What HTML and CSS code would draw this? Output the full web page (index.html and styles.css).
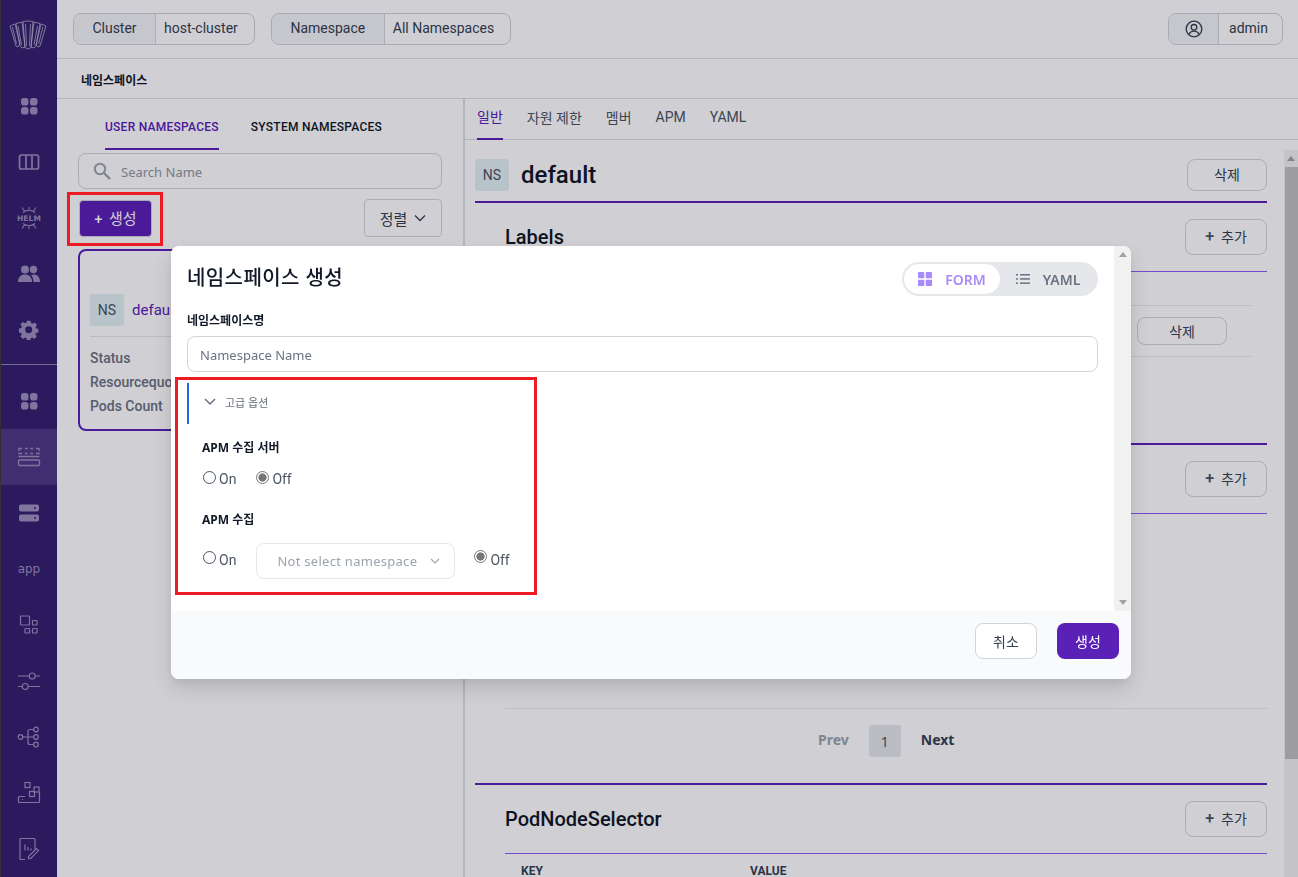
FILE: index.html
```html
<!DOCTYPE html>
<html lang="ko">
<head>
<meta charset="utf-8">
<title>네임스페이스</title>
<link rel="stylesheet" href="styles.css">
</head>
<body>
<div class="app">
  <nav class="rail">
    <div class="logo">
      <svg width="38" height="30" viewBox="0 0 38 30" fill="none" stroke="currentColor" stroke-width=".7" stroke-linejoin="round">
        <path d="M1 6 6 4l5 20-2 3-2-1z"/><path d="M7 3.500 13 2l3 25-3 1-2-2z"/><path d="M14 1.500 19 1l5 .5-2 26-3 1.500-3-1.500z"/><path d="M25 2l6 1.500-4 22.500-2 2-3-1z"/><path d="M32 4l5 2-6 20-2 1-2-2z"/>
        <path d="M3.500 7l4 17M9 6l3.500 19M16.500 4l1 22M21.500 4l-1 22M28.500 6 25 25M34 7l-4.500 17"/>
      </svg>
    </div>
    <a class="rail-item">
      <svg width="20" height="20" viewBox="0 0 20 20" fill="currentColor"><rect x="2" y="2" width="7.500" height="7.500" rx="2.800"/><rect x="11" y="2" width="7.500" height="7.500" rx="2.800"/><rect x="2" y="11" width="7.500" height="7.500" rx="2.800"/><rect x="11" y="11" width="7.500" height="7.500" rx="2.800"/></svg>
    </a>
    <a class="rail-item">
      <svg width="22" height="18" viewBox="0 0 22 18" fill="none" stroke="currentColor" stroke-width="1.700"><rect x="1.500" y="2" width="19" height="14" rx="2"/><path d="M8 2v14M14 2v14"/></svg>
    </a>
    <a class="rail-item">
      <svg width="26" height="26" viewBox="0 0 26 26" fill="none" stroke="currentColor" stroke-width="1.100"><path d="M7 7.500c3.500-3 8.500-3 12 0M7 18.500c3.500 3 8.500 3 12 0M13 2v2.500M13 21.500V24M6 2.500l2.500 3.500M20 2.500 17.500 6M6 23.500 8.500 20M20 23.500 17.500 20"/><text x="13" y="16" text-anchor="middle" class="helm-text">HELM</text></svg>
    </a>
    <a class="rail-item">
      <svg width="24" height="20" viewBox="0 0 24 20" fill="currentColor"><circle cx="8" cy="5.500" r="4"/><circle cx="16.500" cy="5.500" r="3.700"/><path d="M1 18c0-5 3-7.500 7-7.500s7 2.500 7 7.500z"/><path d="M16.500 18c0-3-.8-5.300-2.500-7 .8-.3 1.600-.5 2.500-.5 4 0 6.500 2.500 6.500 7.500z"/></svg>
    </a>
    <a class="rail-item">
      <svg width="20" height="20" viewBox="0 0 20 20" fill="currentColor"><path fill-rule="evenodd" d="M8.200 1h3.600l.5 2.500 1.500.7 2.200-1.400 2.500 2.500-1.400 2.200.7 1.500 2.200.5v3.600l-2.500.5-.6 1.500 1.400 2.200-2.500 2.500-2.200-1.400-1.500.6-.5 2.500H8.200l-.5-2.500-1.500-.6L4 19.800l-2.500-2.500 1.400-2.200-.6-1.500-2.300-.5V9l2.400-.5.6-1.500L1.500 4.800 4 2.300l2.200 1.400 1.500-.7zM10 6.700a3.600 3.600 0 1 0 0 7.200 3.600 3.600 0 0 0 0-7.200z" transform="translate(0 -.3) scale(.97)"/></svg>
    </a>
    <div class="rail-divider"></div>
    <a class="rail-item">
      <svg width="20" height="20" viewBox="0 0 20 20" fill="currentColor"><rect x="2" y="2" width="7.500" height="7.500" rx="2.800"/><rect x="11" y="2" width="7.500" height="7.500" rx="2.800"/><rect x="2" y="11" width="7.500" height="7.500" rx="2.800"/><rect x="11" y="11" width="7.500" height="7.500" rx="2.800"/></svg>
    </a>
    <a class="rail-item rail-active">
      <svg width="24" height="22" viewBox="0 0 24 22" fill="none" stroke="currentColor" stroke-width="1.300"><path d="M2 5V2.500h3M8 2.500h2.500M13.500 2.500H16M19 2.500h3V5M2 6.500v1h3M8 7.500h2.500M13.500 7.500H16M19 7.500h3v-1"/><path d="M1.500 10.500h21" stroke-width="1.500"/><rect x="1.500" y="14" width="21" height="5.500" rx="1"/></svg>
    </a>
    <a class="rail-item">
      <svg width="22" height="20" viewBox="0 0 22 20" fill="currentColor"><path fill-rule="evenodd" d="M3 1.500h16a2 2 0 0 1 2 2v3a2 2 0 0 1-2 2H3a2 2 0 0 1-2-2v-3a2 2 0 0 1 2-2zm14 2.500a1 1 0 1 0 0 2 1 1 0 0 0 0-2zM3 11.500h16a2 2 0 0 1 2 2v3a2 2 0 0 1-2 2H3a2 2 0 0 1-2-2v-3a2 2 0 0 1 2-2zm14 2.500a1 1 0 1 0 0 2 1 1 0 0 0 0-2z"/></svg>
    </a>
    <a class="rail-item"><span class="rail-app">app</span></a>
    <a class="rail-item">
      <svg width="20" height="20" viewBox="0 0 20 20" fill="none" stroke="currentColor" stroke-width="1.200"><rect x="1.500" y="1" width="9" height="9" rx=".8"/><rect x="13.500" y="5.500" width="4.500" height="4.500" rx=".6"/><rect x="6" y="13.500" width="4.500" height="4.500" rx=".6"/><rect x="13.500" y="13.500" width="4.500" height="4.500" rx=".6"/></svg>
    </a>
    <a class="rail-item">
      <svg width="24" height="20" viewBox="0 0 24 20" fill="none" stroke="currentColor" stroke-width="1.200"><path d="M1 5h11M18.500 5H23M1 15.500h4M11.500 15.500H23"/><circle cx="15.200" cy="5" r="3"/><circle cx="8.200" cy="15.500" r="3"/></svg>
    </a>
    <a class="rail-item">
      <svg width="24" height="22" viewBox="0 0 24 22" fill="none" stroke="currentColor" stroke-width="1.200"><circle cx="3.500" cy="11" r="2.300"/><circle cx="19" cy="3.500" r="2.300"/><circle cx="19" cy="11" r="2.300"/><circle cx="19" cy="18.500" r="2.300"/><path d="M6 11h10.500M11 11V5.500a2 2 0 0 1 2-2h3.500M11 11v5.500a2 2 0 0 0 2 2h3.500"/></svg>
    </a>
    <a class="rail-item">
      <svg width="24" height="24" viewBox="0 0 24 24" fill="none" stroke="currentColor" stroke-width="1.200"><rect x="8" y="1.500" width="5" height="5"/><rect x="17" y="6" width="5" height="5"/><rect x="12.500" y="10.500" width="5" height="5"/><path d="M8 15.500H2.500a1 1 0 0 0-1 1v4a1 1 0 0 0 1 1h19a1 1 0 0 0 1-1V11"/><path d="M5 18.500h1"/></svg>
    </a>
    <a class="rail-item">
      <svg width="22" height="24" viewBox="0 0 22 24" fill="none" stroke="currentColor" stroke-width="1.200"><path d="M7 22.500H3a1 1 0 0 1-1-1v-19a1 1 0 0 1 1-1h13a1 1 0 0 1 1 1V13"/><path d="M7 7.500v6M10 10v3.500M13 11.500v2"/><path d="M11 21.500v2l2 .1 8-8-2-2z" transform="translate(-.5 -2)"/></svg>
    </a>
  </nav>

  <main class="main">
    <header class="topbar">
      <div class="pair"><span class="pair-key pair-key-cluster">Cluster</span><span class="pair-val">host-cluster</span></div>
      <div class="pair"><span class="pair-key pair-key-ns">Namespace</span><span class="pair-val">All Namespaces</span></div>
      <div class="pair pair-user">
        <span class="pair-key pair-key-user">
          <svg width="18" height="18" viewBox="0 0 18 18" fill="none" stroke="currentColor" stroke-width="1.300"><circle cx="9" cy="9" r="7.800"/><circle cx="9" cy="7.300" r="2.800"/><path d="M3.800 14.500c1-2.300 3-3.300 5.200-3.300s4.200 1 5.200 3.300"/></svg>
        </span>
        <span class="pair-val pair-val-user">admin</span>
      </div>
    </header>
    <div class="crumb">네임스페이스</div>

    <div class="split">
      <section class="list-pane">
        <div class="list-tabs">
          <span class="list-tab list-tab-on">USER NAMESPACES</span>
          <span class="list-tab">SYSTEM NAMESPACES</span>
        </div>
        <div class="search">
          <svg width="18" height="18" viewBox="0 0 18 18" fill="none" stroke="currentColor" stroke-width="2"><circle cx="7" cy="7" r="5.200"/><path d="m11 11 6 6" stroke-width="2.400"/></svg>
          <span>Search Name</span>
        </div>
        <div class="list-actions">
          <button class="btn-create"><span class="plus">+</span> 생성</button>
          <button class="btn-sort">정렬
            <svg width="12" height="8" viewBox="0 0 12 8" fill="none" stroke="currentColor" stroke-width="1.300"><path d="m1 1.500 5 5 5-5"/></svg>
          </button>
        </div>
        <article class="ns-card">
          <div class="ns-head"><span class="badge">NS</span><span class="ns-name">default</span></div>
          <div class="ns-rows">
            <div>Status</div>
            <div>Resourcequota</div>
            <div>Pods Count</div>
          </div>
        </article>
      </section>

      <section class="detail-pane">
        <div class="detail-tabs">
          <span class="detail-tab detail-tab-on">일반</span>
          <span class="detail-tab">자원 제한</span>
          <span class="detail-tab">멤버</span>
          <span class="detail-tab">APM</span>
          <span class="detail-tab">YAML</span>
        </div>
        <div class="detail-scroll">
          <div class="detail-body">
            <div class="detail-head">
              <span class="badge">NS</span>
              <h1 class="detail-title">default</h1>
              <button class="btn-line btn-del-top">삭제</button>
            </div>

            <div class="block block-labels">
              <div class="block-head"><h2>Labels</h2><button class="btn-line btn-add"><span class="plus-dark">+</span>추가</button></div>
              <div class="table-head"></div>
              <div class="table-row"><button class="btn-line btn-del-row">삭제</button></div>
            </div>

            <div class="block block-annot">
              <div class="block-head"><h2>Annotations</h2><button class="btn-line btn-add"><span class="plus-dark">+</span>추가</button></div>
              <div class="annot-space"></div>
              <div class="pager">
                <span class="pager-prev">Prev</span>
                <span class="pager-num">1</span>
                <span class="pager-next">Next</span>
              </div>
            </div>

            <div class="block block-pod">
              <div class="block-head"><h2>PodNodeSelector</h2><button class="btn-line btn-add"><span class="plus-dark">+</span>추가</button></div>
              <div class="pod-cols"><span class="pod-key">KEY</span><span>VALUE</span></div>
            </div>
          </div>
          <div class="page-scroll"><span class="page-arrow"></span><span class="page-thumb"></span></div>
        </div>
      </section>
    </div>
  </main>
</div>

<div class="overlay"></div>

<div class="modal">
  <div class="modal-main">
    <div class="modal-body">
      <div class="modal-head">
        <h3 class="modal-title">네임스페이스 생성</h3>
        <div class="mode">
          <span class="mode-btn mode-on">
            <svg width="14" height="14" viewBox="0 0 14 14" fill="currentColor"><rect width="6.300" height="6.300" rx=".8"/><rect x="7.700" width="6.300" height="6.300" rx=".8"/><rect y="7.700" width="6.300" height="6.300" rx=".8"/><rect x="7.700" y="7.700" width="6.300" height="6.300" rx=".8"/></svg>
            FORM
          </span>
          <span class="mode-btn">
            <svg width="14" height="12" viewBox="0 0 14 12" fill="currentColor"><rect y="1" width="2" height="1.500"/><rect x="4" y="1" width="10" height="1.500"/><rect y="5.200" width="2" height="1.500"/><rect x="4" y="5.200" width="10" height="1.500"/><rect y="9.400" width="2" height="1.500"/><rect x="4" y="9.400" width="10" height="1.500"/></svg>
            YAML
          </span>
        </div>
      </div>
      <label class="field-label">네임스페이스명</label>
      <div class="text-input">Namespace Name</div>

      <div class="expander">
        <svg width="12" height="8" viewBox="0 0 12 8" fill="none" stroke="currentColor" stroke-width="1.500"><path d="m1 1 5 5 5-5"/></svg>
        <span>고급 옵션</span>
      </div>
      <div class="advanced">
        <div class="adv-label">APM 수집 서버</div>
        <div class="radio-row">
          <span class="radio"></span><span class="radio-text">On</span>
          <span class="radio radio-on radio-gap"></span><span class="radio-text">Off</span>
        </div>
        <div class="adv-label adv-label-2">APM 수집</div>
        <div class="radio-row radio-row-2">
          <span class="radio"></span><span class="radio-text">On</span>
          <div class="select">Not select namespace
            <svg width="10" height="6" viewBox="0 0 10 6" fill="none" stroke="currentColor" stroke-width="1.100"><path d="m1 1 4 4 4-4"/></svg>
          </div>
          <span class="radio radio-on"></span><span class="radio-text">Off</span>
        </div>
      </div>
    </div>
    <div class="modal-scroll">
      <span class="tri-up"></span>
      <span class="tri-down"></span>
    </div>
  </div>
  <div class="modal-foot">
    <button class="btn-cancel">취소</button>
    <button class="btn-ok">생성</button>
  </div>
</div>

<div class="mark mark-create"></div>
<div class="mark mark-advanced"></div>
</body>
</html>
```

FILE: styles.css
```css
* { box-sizing: border-box; }
html, body { margin: 0; height: 100%; overflow: hidden; }
body {
  font-family: Roboto, "Noto Sans CJK KR", sans-serif;
  font-size: 14px;
  color: #1f2937;
  background: #fff;
}
button { font: inherit; cursor: pointer; }
h1, h2, h3 { margin: 0; }

.app { display: flex; width: 1298px; height: 877px; }

/* left rail */
.rail {
  flex: 0 0 57px;
  background: #36206f;
  border-left: 1px solid #3d3d3d;
  color: #9d90be;
  display: flex;
  flex-direction: column;
}
.logo { height: 80px; padding: 20px 2px 0 0; display: flex; justify-content: center; align-items: flex-start; color: #c9c4d6; }
.rail-item { height: 56px; flex: none; display: flex; align-items: center; justify-content: center; }
.rail-active { background: #4e3a85; }
.rail-divider { height: 1px; background: #8e84a8; margin: 6px 0 8px; flex: none; }
.rail-app { font-family: "DejaVu Sans", sans-serif; font-size: 12px; letter-spacing: -.1px; }
.helm-text { font-family: "DejaVu Sans", sans-serif; font-size: 7.500px; font-weight: 700; fill: currentColor; stroke: none; letter-spacing: .1px; }

.main { flex: 1; min-width: 0; display: flex; flex-direction: column; }

/* top bar */
.topbar {
  height: 59px;
  flex: none;
  border-bottom: 1px solid #dcdee2;
  display: flex;
  align-items: flex-start;
  gap: 16px;
  padding: 13px 15px 0 16px;
}
.pair {
  height: 32px;
  display: flex;
  border: 1px solid #cfd2d8;
  border-radius: 8px;
  overflow: hidden;
}
.pair-key, .pair-val { display: flex; align-items: center; justify-content: center; color: #374151; padding-bottom: 2px; }
.pair-key { background: #f3f4f6; border-right: 1px solid #d1d5db; }
.pair-key-cluster { width: 82px; }
.pair-val { padding-left: 8px; padding-right: 16px; }
.pair-key-ns { width: 113px; }
.pair-user { margin-left: auto; }
.pair-key-user { width: 50px; color: #374151; padding-bottom: 0; }
.pair-val-user { width: 63px; padding: 0 4px 2px 0; }

.crumb {
  height: 40px;
  flex: none;
  border-bottom: 1px solid #dcdee2;
  padding: 2px 24px 0;
  display: flex;
  align-items: center;
  font-size: 12px;
  font-weight: 700;
  color: #111827;
}

.split { flex: 1; min-height: 0; display: flex; }

/* namespace list */
.list-pane {
  flex: 0 0 408px;
  border-right: 2px solid #dcdee2;
  padding: 0 21px;
}
.list-tabs { display: flex; gap: 32px; padding-left: 27px; height: 51px; }
.list-tab { font-size: 12px; font-weight: 500; height: 51px; display: flex; align-items: center; padding-top: 5px; color: #111827; letter-spacing: .25px; }
.list-tab-on { color: #5b21b6; border-bottom: 2px solid #5b21b6; padding-top: 7px; }
.search {
  height: 36px;
  margin-top: 3px;
  border: 1px solid #d1d5db;
  border-radius: 8px;
  display: flex;
  align-items: center;
  gap: 10px;
  padding-left: 14px;
  color: #9ca3af;
  font-family: "Noto Sans", "Noto Sans CJK KR", sans-serif;
  font-size: 13px;
}
.search span { color: #8f96a1; padding-top: 1px; }
.list-actions { display: flex; justify-content: space-between; align-items: flex-start; margin-top: 10px; padding-left: 1px; }
.btn-create {
  width: 73px;
  height: 37px;
  margin-top: 1px;
  border: 1px solid #d1d5db;
  border-radius: 4px;
  background: #5b21b6;
  color: #fff;
  padding: 0 0 2px;
  font-size: 15px;
}
.plus { margin-right: 3px; font-weight: 500; font-size: 14px; }
.btn-sort {
  width: 78px;
  height: 38px;
  border: 1px solid #d1d5db;
  border-radius: 4px;
  background: transparent;
  color: #374151;
  padding: 0;
  display: flex;
  align-items: center;
  justify-content: center;
  gap: 7px;
  font-size: 15px;
}
.ns-card {
  height: 182px;
  margin-top: 12px;
  border: 2px solid #5b21b6;
  border-radius: 8px;
  padding: 42px 10px 0;
}
.badge {
  width: 34px;
  height: 32px;
  flex: none;
  border-radius: 3px;
  background: #e2f1f2;
  color: #4b5563;
  display: flex;
  align-items: center;
  justify-content: center;
}
.ns-head { display: flex; align-items: center; gap: 8px; height: 33px; }
.ns-name { color: #5b21b6; font-size: 15px; }
.ns-rows { margin-top: 10px; border-top: 1px solid #e5e7eb; padding-top: 9px; color: #6b7280; font-weight: 500; }
.ns-rows div { height: 24px; line-height: 24px; }

/* detail */
.detail-pane { flex: 1; min-width: 0; display: flex; flex-direction: column; }
.detail-tabs { height: 41px; flex: none; border-bottom: 1px solid #dcdee2; display: flex; gap: 24px; padding-left: 12px; }
.detail-tab { color: #4b5563; height: 40px; display: flex; align-items: center; padding-bottom: 5px; }
.detail-tab-on { color: #5b21b6; border-bottom: 2px solid #5b21b6; height: 41px; padding-bottom: 5px; }
.detail-scroll { flex: 1; min-height: 0; display: flex; overflow: hidden; }
.detail-body { flex: 1; min-width: 0; padding: 19px 17px 0 10px; }
.detail-head { display: flex; align-items: center; gap: 12px; height: 44px; padding-bottom: 10px; border-bottom: 2px solid #5b21b6; }
.detail-title { font-size: 24px; font-weight: 500; color: #111827; flex: 1; }
.btn-line {
  background: transparent;
  border: 1px solid #d1d5db;
  border-radius: 8px;
  color: #374151;
  padding: 0;
}
.btn-del-top { width: 80px; height: 32px; padding-bottom: 2px; }
.btn-add { width: 82px; height: 36px; padding-bottom: 3px; }
.plus-dark { font-size: 16px; font-weight: 500; margin-right: 7px; color: #4b5563; }
.block { padding: 16px 0 0 30px; }
.block-head {
  display: flex;
  justify-content: space-between;
  align-items: center;
  height: 53px;
  padding-bottom: 16px;
  border-bottom: 1px solid #8b5cf6;
}
.block-head h2 { font-size: 20px; font-weight: 500; color: #111827; margin-top: 0; }
.block-labels { height: 240px; }
.table-head { height: 34px; margin: 0 16px; border-bottom: 1px solid #e5e7eb; }
.table-row { height: 51px; margin: 0 16px; border-bottom: 1px solid #e5e7eb; display: flex; justify-content: flex-end; align-items: center; padding-right: 24px; }
.btn-del-row { width: 90px; height: 28px; padding-bottom: 1px; }
.block-annot { height: 340px; border-top: 2px solid #5b21b6; }
.annot-space { height: 195px; border-bottom: 1px solid #e5e7eb; }
.pager { display: flex; align-items: center; margin-top: 16px; padding-left: 313px; gap: 20px; height: 32px; font-family: "Noto Sans", sans-serif; font-weight: 700; }
.pager-prev { color: #9ca3af; padding-bottom: 3px; }
.pager-num { width: 32px; height: 32px; border-radius: 3px; background: #e5e7eb; color: #4b5563; display: flex; align-items: center; justify-content: center; font-weight: 400; }
.pager-next { color: #374151; padding-bottom: 3px; }
.block-pod { border-top: 2px solid #5b21b6; }
.pod-cols { display: flex; padding: 10px 16px 0; font-size: 12px; font-weight: 700; color: #374151; }
.pod-key { width: 229px; }

.page-scroll { flex: 0 0 14px; margin-top: 10px; background: #f1f1f1; display: flex; flex-direction: column; align-items: stretch; }
.page-arrow { height: 17px; flex: none; display: flex; }
.page-arrow::before { content: ""; margin: 6px auto 0; border: 4px solid transparent; border-top: 0; border-bottom: 5px solid #a3a3a3; height: 0; }
.page-thumb { height: 592px; flex: none; background: #c1c1c1; margin-left: 1px; }

/* overlay + modal */
.overlay { position: fixed; inset: 0; background: rgba(0, 0, 20, .185); }
.modal {
  position: absolute;
  left: 171px;
  top: 246px;
  width: 960px;
  height: 433px;
  background: #fff;
  border-radius: 8px;
  overflow: hidden;
  box-shadow: 0 10px 20px rgba(0, 0, 0, .12), 0 3px 8px rgba(0, 0, 0, .06);
  display: flex;
  flex-direction: column;
  font-family: "Noto Sans", "Noto Sans CJK KR", sans-serif;
}
.modal-main { height: 365px; display: flex; flex: none; }
.modal-body { flex: 1; min-width: 0; padding: 16px 16px 0; }
.modal-head { display: flex; justify-content: space-between; align-items: flex-start; height: 50px; }
.modal-title { font-size: 20px; font-weight: 500; color: #111827; line-height: 26px; margin-top: 3px; letter-spacing: .4px; }
.mode {
  width: 196px;
  height: 34px;
  border-radius: 17px;
  background: #e5e7eb;
  padding: 2px;
  display: flex;
  font-size: 14px;
  font-weight: 600;
  color: #6b7280;
}
.mode-btn { flex: 1; display: flex; align-items: center; justify-content: center; gap: 13px; border-radius: 15px; }
.mode-on { flex: 0 0 96px; background: #fff; color: #a78bfa; }
.field-label { display: block; font-size: 12px; font-weight: 700; color: #111827; line-height: 18px; }
.text-input {
  height: 36px;
  margin-top: 6px;
  border: 1px solid #d1d5db;
  border-radius: 8px;
  padding: 1px 0 0 12px;
  display: flex;
  align-items: center;
  color: #6b7280;
  font-size: 13px;
}
.expander {
  height: 41px;
  margin-top: 11px;
  border-left: 2px solid #2563eb;
  display: flex;
  align-items: center;
  padding: 0 0 3px 15px;
  gap: 9px;
  color: #6b7280;
  font-size: 11px;
}
.advanced { padding: 15px 0 0 15px; }
.adv-label { font-size: 12px; font-weight: 700; color: #111827; line-height: 18px; }
.adv-label-2 { margin-top: 22px; }
.radio-row { display: flex; align-items: center; height: 20px; margin-top: 12px; font-family: Roboto, sans-serif; color: #4b5563; }
.radio {
  width: 13px;
  height: 13px;
  flex: none;
  border: 1px solid #4b5563;
  border-radius: 50%;
  background: #fff;
  margin: 0 3px 3px 1px;
}
.radio-on { border-color: #767676; background: radial-gradient(circle, #767676 0, #767676 3.800px, #fff 4.400px); }
.radio-gap { margin-left: 20px; }
.radio-text { line-height: 20px; }
.radio-row-2 { height: 36px; margin-top: 14px; }
.radio-row-2 .radio { margin-bottom: 7px; }
.radio-row-2 .radio-text { margin-bottom: 3px; }
.radio-row-2 .radio-on { margin-bottom: 9px; }
.select {
  width: 199px;
  height: 36px;
  margin: 0 18px 0 20px;
  border: 1px solid #e5e7eb;
  border-radius: 8px;
  padding: 0 14px 0 20px;
  display: flex;
  align-items: center;
  justify-content: space-between;
  color: #9ca3af;
  font-family: "Noto Sans", sans-serif;
  font-size: 13px;
  letter-spacing: .28px;
}
.modal-scroll { flex: 0 0 17px; background: #f1f1f1; display: flex; flex-direction: column; justify-content: space-between; align-items: center; padding: 6px 0; }
.tri-up { border: 4px solid transparent; border-top: 0; border-bottom: 5px solid #a3a3a3; }
.tri-down { border: 4px solid transparent; border-bottom: 0; border-top: 5px solid #a3a3a3; }
.modal-foot {
  flex: 1;
  background: #f9fafb;
  display: flex;
  justify-content: flex-end;
  align-items: flex-start;
  gap: 20px;
  padding: 12px 12px 0 0;
}
.btn-cancel, .btn-ok { width: 62px; height: 36px; border-radius: 8px; padding: 0; font-size: 14px; font-family: "Noto Sans CJK KR", sans-serif; }
.btn-cancel { background: #fff; border: 1px solid #d1d5db; color: #374151; }
.btn-ok { background: #5b21b6; border: 0; color: #fff; }

/* red annotation frames */
.mark { position: absolute; border: 3px solid #ed1c24; }
.mark-create { left: 67px; top: 192px; width: 96px; height: 54px; }
.mark-advanced { left: 175px; top: 377px; width: 362px; height: 218px; }
```
